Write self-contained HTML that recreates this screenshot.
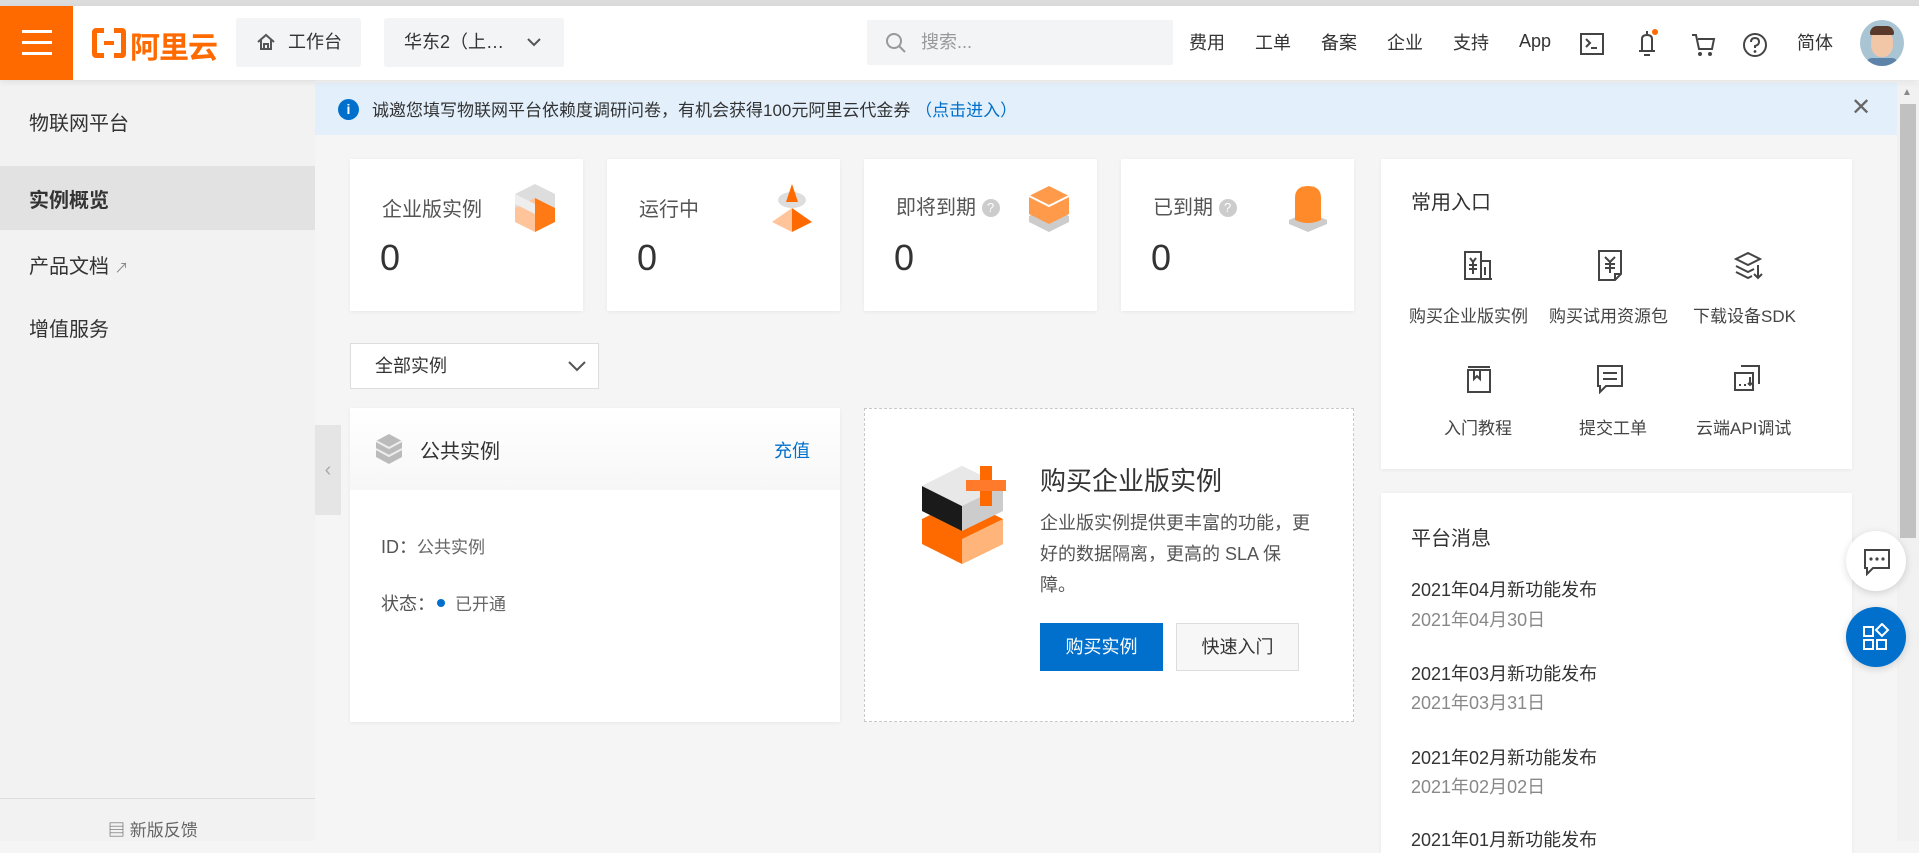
<!DOCTYPE html>
<html><head><meta charset="utf-8">
<style>
*{margin:0;padding:0;box-sizing:border-box}
body{width:1919px;height:841px;overflow:hidden;background:#f5f5f5;font-family:"Liberation Sans","Noto Sans CJK SC",sans-serif;color:#333;position:relative}
.a{position:absolute}
.card{position:absolute;background:#fff;box-shadow:0 1px 4px rgba(0,0,0,.06)}
.nav{position:absolute;top:23px;font-size:18px;color:#333}
</style></head><body>
<div class="a" style="left:0;top:0;width:1919px;height:6px;background:#dcdcdc"></div>
<div class="a" style="left:0;top:6px;width:1919px;height:74px;background:#fff;box-shadow:0 2px 6px rgba(0,0,0,.08);z-index:2">
  <div class="a" style="left:0;top:0;width:73px;height:74px;background:#ff6a00">
    <div class="a" style="left:22px;top:24px;width:30px;height:3px;background:#fff"></div>
    <div class="a" style="left:22px;top:35px;width:30px;height:3px;background:#fff"></div>
    <div class="a" style="left:22px;top:46px;width:30px;height:3px;background:#fff"></div>
  </div>
  <div class="a" style="left:92px;top:22px;width:34px;height:30px;border:5px solid #ff6a00;border-radius:4px"></div>
  <div class="a" style="left:104px;top:18px;width:10px;height:38px;background:#fff"></div>
  <div class="a" style="left:104px;top:35px;width:10px;height:4px;background:#ff6a00"></div>
  <div class="a" style="left:130px;top:17px;font-size:30px;font-weight:bold;color:#ff6a00;letter-spacing:-1px">阿里云</div>
  <div class="a" style="left:236px;top:12px;width:125px;height:49px;background:#f3f4f6;border-radius:3px;font-size:18px;line-height:49px;padding-left:52px">工作台
    <svg class="a" style="left:20px;top:15px" width="20" height="18" viewBox="0 0 20 18"><path d="M2 9 L10 2 L18 9 M5 7 V16 H15 V7 M8 16 V11 H12 V16" fill="none" stroke="#555" stroke-width="2"/></svg></div>
  <div class="a" style="left:384px;top:12px;width:180px;height:49px;background:#f3f4f6;border-radius:3px;font-size:18px;line-height:49px;padding-left:20px">华东2（上…
    <svg class="a" style="left:142px;top:19px" width="16" height="10"><path d="M2 2 L8 8 L14 2" fill="none" stroke="#555" stroke-width="2"/></svg></div>
  <div class="a" style="left:867px;top:14px;width:306px;height:45px;background:#f3f4f6;border-radius:2px;font-size:18px;color:#999;line-height:45px;padding-left:54px">搜索...
    <svg class="a" style="left:18px;top:12px" width="22" height="22"><circle cx="9" cy="9" r="7" fill="none" stroke="#999" stroke-width="2"/><path d="M14 14 L20 20" stroke="#999" stroke-width="2"/></svg></div>
  <div class="nav" style="left:1189px">费用</div>
  <div class="nav" style="left:1255px">工单</div>
  <div class="nav" style="left:1321px">备案</div>
  <div class="nav" style="left:1387px">企业</div>
  <div class="nav" style="left:1453px">支持</div>
  <div class="nav" style="left:1519px;top:25px">App</div>
  <svg class="a" style="left:1580px;top:27px" width="24" height="22"><rect x="1" y="1" width="22" height="20" fill="none" stroke="#444" stroke-width="2"/><path d="M6 6 L10 10 L6 14 M11 15 H17" stroke="#444" stroke-width="2" fill="none"/></svg>
  <svg class="a" style="left:1636px;top:22px" width="22" height="32"><path d="M11 3 V6 M6 22 V11 Q6 7 11 7 Q16 7 16 11 V22 M3 23 H19 M8 27 H14" stroke="#444" stroke-width="2" fill="none"/><circle cx="19" cy="4" r="3" fill="#ff6a00"/></svg>
  <svg class="a" style="left:1690px;top:26px" width="26" height="26"><path d="M2 3 H6 L9 17 H22 L24 7 H8" stroke="#444" stroke-width="2" fill="none"/><circle cx="10" cy="22" r="2" fill="#444"/><circle cx="20" cy="22" r="2" fill="#444"/></svg>
  <svg class="a" style="left:1742px;top:26px" width="26" height="26"><circle cx="13" cy="13" r="11" fill="none" stroke="#444" stroke-width="2"/><path d="M9 10 Q9 6 13 6 Q17 6 17 10 Q17 13 13 14 V16" fill="none" stroke="#444" stroke-width="2"/><circle cx="13" cy="19.5" r="1.4" fill="#444"/></svg>
  <div class="nav" style="left:1797px">简体</div>
  <div class="a" style="left:1860px;top:14px;width:44px;height:46px;border-radius:50%;background:#a9c4d3;overflow:hidden">
    <div class="a" style="left:11px;top:9px;width:22px;height:28px;border-radius:45%;background:#f2c7a8"></div>
    <div class="a" style="left:10px;top:6px;width:24px;height:9px;border-radius:8px 8px 2px 2px;background:#5a3a2a"></div>
    <div class="a" style="left:6px;top:38px;width:32px;height:12px;background:#5d84a8;border-radius:8px"></div>
  </div>
</div>
<!-- sidebar -->
<div class="a" style="left:0;top:80px;width:315px;height:761px;background:#f2f2f2">
  <div class="a" style="left:29px;top:27px;font-size:20px">物联网平台</div>
  <div class="a" style="left:0;top:86px;width:315px;height:64px;background:#e2e2e2"></div>
  <div class="a" style="left:29px;top:104px;font-size:20px;font-weight:bold">实例概览</div>
  <div class="a" style="left:29px;top:170px;font-size:20px">产品文档 <span style="font-size:14px;color:#888">↗</span></div>
  <div class="a" style="left:29px;top:233px;font-size:20px">增值服务</div>
  <div class="a" style="left:0;top:718px;width:315px;height:1px;background:#ddd"></div>
  <div class="a" style="left:108px;top:736px;font-size:17px;color:#666">▤ 新版反馈</div>
</div>
<div class="a" style="left:315px;top:425px;width:26px;height:90px;background:#e5e5e5;color:#aaa;font-size:20px;line-height:90px;text-align:center">‹</div>
<!-- banner -->
<div class="a" style="left:315px;top:83px;width:1582px;height:52px;background:#e3f0fc">
  <div class="a" style="left:23px;top:16px;width:21px;height:21px;border-radius:50%;background:#0070cc;color:#fff;font-size:14px;font-weight:bold;text-align:center;line-height:21px">i</div>
  <div class="a" style="left:57px;top:13px;font-size:17px;color:#333">诚邀您填写物联网平台依赖度调研问卷，有机会获得100元阿里云代金券 <span style="color:#0070cc">（点击进入）</span></div>
  <div class="a" style="left:1536px;top:10px;font-size:24px;color:#666">✕</div>
</div>
<div class="a" style="left:1897px;top:83px;width:22px;height:758px;background:#f1f1f1"><div class="a" style="left:3px;top:21px;width:16px;height:434px;background:#c1c1c1"></div><div class="a" style="left:5px;top:4px;font-size:10px;color:#888">▲</div></div>
<!-- stat cards -->
<div class="card" style="left:350px;top:159px;width:233px;height:152px"><div class="a" style="left:32px;top:34px;font-size:20px;color:#555">企业版实例</div><div class="a" style="left:30px;top:78px;font-size:36px">0</div>
<svg class="a" style="left:163px;top:25px" width="44" height="50"><path d="M2 10 L22 0 L42 10 L42 24 L22 34 L2 24Z" fill="#ddd"/><path d="M22 14 L42 24 L42 38 L22 48Z" fill="#ff7a14"/><path d="M2 24 L22 14 L22 48 L2 38Z" fill="#ffc49a"/><path d="M2 10 L22 20 L22 30 L2 20Z" fill="#eee"/></svg></div>
<div class="card" style="left:607px;top:159px;width:233px;height:152px"><div class="a" style="left:32px;top:34px;font-size:20px;color:#555">运行中</div><div class="a" style="left:30px;top:78px;font-size:36px">0</div>
<svg class="a" style="left:163px;top:25px" width="44" height="50"><ellipse cx="22" cy="16" rx="14" ry="8" fill="#ddd"/><path d="M22 0 L28 18 L16 18Z" fill="#ff6a00"/><path d="M22 24 L42 38 L22 48Z" fill="#ff6a00"/><path d="M22 24 L2 38 L22 48Z" fill="#ffc49a"/></svg></div>
<div class="card" style="left:864px;top:159px;width:233px;height:152px"><div class="a" style="left:32px;top:32px;font-size:20px;color:#555">即将到期 <span style="display:inline-block;width:18px;height:18px;border-radius:50%;background:#ccc;color:#fff;font-size:13px;text-align:center;line-height:18px;vertical-align:2px">?</span></div><div class="a" style="left:30px;top:78px;font-size:36px">0</div>
<svg class="a" style="left:163px;top:25px" width="44" height="50"><path d="M2 32 L22 22 L42 32 L42 38 L22 48 L2 38Z" fill="#ccc"/><path d="M2 12 L22 2 L42 12 L42 30 L22 40 L2 30Z" fill="#ff9a4a"/><path d="M2 12 L22 22 L42 12" fill="none" stroke="#fff" stroke-width="2"/></svg></div>
<div class="card" style="left:1121px;top:159px;width:233px;height:152px"><div class="a" style="left:32px;top:32px;font-size:20px;color:#555">已到期 <span style="display:inline-block;width:18px;height:18px;border-radius:50%;background:#ccc;color:#fff;font-size:13px;text-align:center;line-height:18px;vertical-align:2px">?</span></div><div class="a" style="left:30px;top:78px;font-size:36px">0</div>
<svg class="a" style="left:166px;top:25px" width="42" height="50"><path d="M2 36 L21 28 L40 36 L40 40 L21 48 L2 40Z" fill="#ccc"/><path d="M8 36 V14 Q8 2 21 2 Q34 2 34 14 V36 Q21 42 8 36Z" fill="#ff8a2a"/></svg></div>
<!-- dropdown -->
<div class="a" style="left:350px;top:343px;width:249px;height:46px;background:#fff;border:1px solid #ddd;font-size:18px;line-height:44px;padding-left:24px">全部实例
<svg class="a" style="left:216px;top:16px" width="20" height="12"><path d="M2 2 L10 10 L18 2" fill="none" stroke="#555" stroke-width="2"/></svg></div>
<!-- public instance -->
<div class="card" style="left:350px;top:408px;width:490px;height:314px">
  <div class="a" style="left:0;top:0;width:490px;height:82px;background:linear-gradient(#fff,#f7f7f7)"></div>
  <svg class="a" style="left:25px;top:25px" width="28" height="32"><path d="M1 8 L14 1 L27 8 L27 24 L14 31 L1 24Z" fill="#bbb"/><path d="M1 8 L14 15 L27 8" fill="none" stroke="#eee" stroke-width="2"/><path d="M1 16 L14 23 L27 16" fill="none" stroke="#eee" stroke-width="2"/></svg>
  <div class="a" style="left:70px;top:27px;font-size:20px">公共实例</div>
  <div class="a" style="left:424px;top:29px;font-size:18px;color:#0070cc">充值</div>
  <div class="a" style="left:31px;top:125px;font-size:18px;color:#555">ID：<span style="font-size:17px;color:#666">公共实例</span></div>
  <div class="a" style="left:31px;top:182px;font-size:18px;color:#555">状态：<span style="display:inline-block;width:8px;height:8px;border-radius:50%;background:#0070cc;vertical-align:3px;margin:0 10px 0 2px"></span><span style="color:#666;font-size:17px">已开通</span></div>
</div>
<!-- buy card -->
<div class="a" style="left:864px;top:408px;width:490px;height:314px;border:1px dashed #c8c8c8;background:#fff">
  <svg class="a" style="left:55px;top:55px" width="105" height="100"><path d="M2 55 L42 35 L83 55 L83 80 L42 100 L2 80Z" fill="#ff6a00"/><path d="M42 75 L83 55 L83 80 L42 100Z" fill="#ffb47a"/><path d="M2 22 L42 2 L83 22 L83 47 L42 67 L2 47Z" fill="#ccc"/><path d="M2 22 L42 42 L42 67 L2 47Z" fill="#1a1a1a"/><path d="M2 22 L42 2 L83 22 L42 42Z" fill="#e8e8e8"/><rect x="60" y="2" width="12" height="40" fill="#ff6a00"/><rect x="46" y="16" width="40" height="11" fill="#ff7a2a"/></svg>
  <div class="a" style="left:175px;top:52px;font-size:26px;color:#333">购买企业版实例</div>
  <div class="a" style="left:175px;top:99px;width:276px;font-size:18px;line-height:31px;color:#555">企业版实例提供更丰富的功能，更好的数据隔离，更高的 SLA 保障。</div>
  <div class="a" style="left:175px;top:214px;width:123px;height:48px;background:#0070cc;color:#fff;font-size:18px;line-height:48px;text-align:center">购买实例</div>
  <div class="a" style="left:311px;top:214px;width:123px;height:48px;background:#f7f7f7;border:1px solid #ddd;color:#333;font-size:18px;line-height:46px;text-align:center">快速入门</div>
</div>
<!-- right -->
<div class="card" style="left:1381px;top:159px;width:471px;height:310px">
  <div class="a" style="left:30px;top:27px;font-size:20px">常用入口</div>
  <svg class="a" style="left:82px;top:90px" width="30" height="32"><path d="M2 30 V3 H18 V30 M18 12 H27 V30 M1 30 H29 M7 9 L10 13 L13 9 M10 13 V25 M6 16 H14 M6 20 H14 M22 18 V26" fill="none" stroke="#444" stroke-width="2"/></svg>
  <svg class="a" style="left:216px;top:90px" width="26" height="32"><path d="M2 2 H24 V25 L18 31 H2Z M18 31 V25 H24 M8 8 L13 13 L18 8 M13 13 V24 M8 15 H18 M8 19 H18" fill="none" stroke="#444" stroke-width="2"/></svg>
  <svg class="a" style="left:353px;top:92px" width="30" height="30"><path d="M14 2 L26 8 L14 14 L2 8Z M2 15 L14 21 L20 18 M2 21 L14 27 L18 25 M24 14 V27 M20 23 L24 27 L28 23" fill="none" stroke="#444" stroke-width="2"/></svg>
  <svg class="a" style="left:85px;top:205px" width="26" height="30"><path d="M2 6 H24 V28 H2Z M2 3 H24 M8 6 V15 L11 12 L14 15 V6" fill="none" stroke="#444" stroke-width="2"/></svg>
  <svg class="a" style="left:215px;top:205px" width="28" height="30"><path d="M2 2 H26 V22 H10 L4 28 V22 H2Z M7 9 H21 M7 15 H21" fill="none" stroke="#444" stroke-width="2"/></svg>
  <svg class="a" style="left:352px;top:205px" width="28" height="28"><path d="M8 2 H26 V20 M2 9 H20 V26 H2Z M6 21 H8 M11 21 H13 M17 13 V21 M15 19 L17 21 L19 19" fill="none" stroke="#444" stroke-width="2"/></svg>
  <div class="a" style="left:28px;top:143px;font-size:17px;color:#444">购买企业版实例</div>
  <div class="a" style="left:168px;top:143px;font-size:17px;color:#444">购买试用资源包</div>
  <div class="a" style="left:312px;top:143px;font-size:17px;color:#444">下载设备SDK</div>
  <div class="a" style="left:63px;top:255px;font-size:17px;color:#444">入门教程</div>
  <div class="a" style="left:198px;top:255px;font-size:17px;color:#444">提交工单</div>
  <div class="a" style="left:315px;top:255px;font-size:17px;color:#444">云端API调试</div>
</div>
<div class="card" style="left:1381px;top:493px;width:471px;height:360px">
  <div class="a" style="left:30px;top:29px;font-size:20px">平台消息</div>
  <div class="a" style="left:30px;top:83px;font-size:18px;color:#333">2021年04月新功能发布</div>
  <div class="a" style="left:30px;top:113px;font-size:18px;color:#888">2021年04月30日</div>
  <div class="a" style="left:30px;top:167px;font-size:18px;color:#333">2021年03月新功能发布</div>
  <div class="a" style="left:30px;top:196px;font-size:18px;color:#888">2021年03月31日</div>
  <div class="a" style="left:30px;top:251px;font-size:18px;color:#333">2021年02月新功能发布</div>
  <div class="a" style="left:30px;top:280px;font-size:18px;color:#888">2021年02月02日</div>
  <div class="a" style="left:30px;top:333px;font-size:18px;color:#333">2021年01月新功能发布</div>
</div>
<!-- floats -->
<div class="a" style="left:1846px;top:531px;width:60px;height:60px;border-radius:50%;background:#fff;box-shadow:0 2px 8px rgba(0,0,0,.15)">
<svg class="a" style="left:17px;top:17px" width="28" height="28"><path d="M2 2 H26 V20 H10 L4 26 V20 H2Z" fill="none" stroke="#444" stroke-width="2"/><circle cx="8" cy="11" r="1.6" fill="#444"/><circle cx="14" cy="11" r="1.6" fill="#444"/><circle cx="20" cy="11" r="1.6" fill="#444"/></svg></div>
<div class="a" style="left:1846px;top:607px;width:60px;height:60px;border-radius:50%;background:#0070cc;box-shadow:0 2px 8px rgba(0,0,0,.15)">
<svg class="a" style="left:16px;top:16px" width="28" height="28"><rect x="2" y="4" width="9" height="9" fill="none" stroke="#fff" stroke-width="2"/><rect x="2" y="17" width="9" height="9" fill="none" stroke="#fff" stroke-width="2"/><rect x="15" y="17" width="9" height="9" fill="none" stroke="#fff" stroke-width="2"/><path d="M20 1 L26 7 L20 13 L14 7Z" fill="none" stroke="#fff" stroke-width="2"/></svg></div>
</body></html>
